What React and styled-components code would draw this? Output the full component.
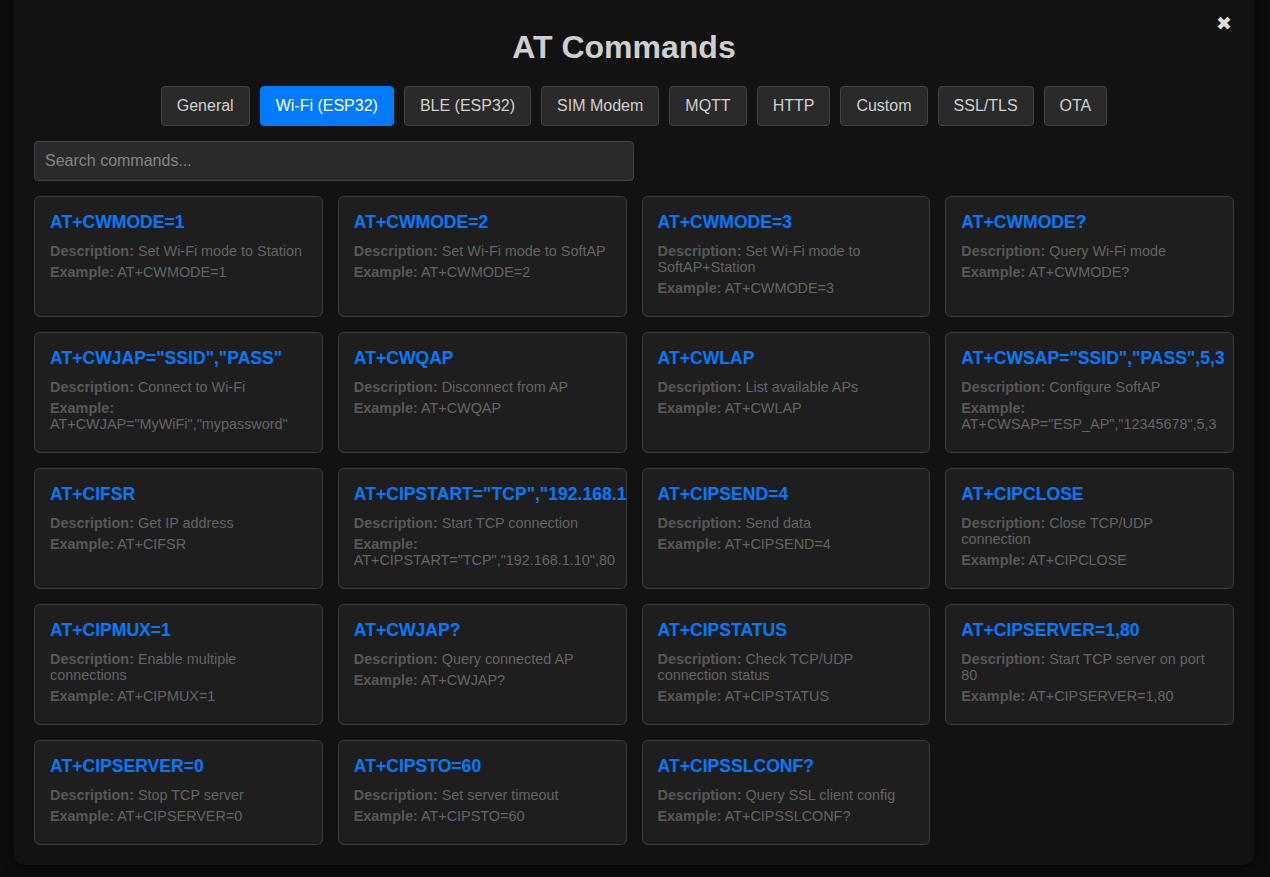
import React, { useState } from 'react';
import styled, { createGlobalStyle } from 'styled-components';

const GlobalStyle = createGlobalStyle`
  html, body {
    margin: 0;
    padding: 0;
    background: #0d0d0d;
    font-family: "Liberation Sans", Arial, sans-serif;
    overflow: hidden;
  }
  * { box-sizing: border-box; }
`;

const Overlay = styled.div`
  min-height: 100vh;
  padding: 0 16px 12px 14px;
`;

const Modal = styled.div`
  position: relative;
  max-width: 1240px;
  margin: -12px auto 0;
  padding: 32px 20px 20px;
  background: #121212;
  border-radius: 10px;
  box-shadow: 0 0 12px rgba(0, 0, 0, 0.6);
`;

const CloseButton = styled.button`
  position: absolute;
  top: 26px;
  right: 22px;
  background: none;
  border: none;
  padding: 0;
  color: #dcdcdc;
  font-family: "DejaVu Sans", sans-serif;
  font-size: 19px;
  line-height: 1;
  cursor: pointer;
`;

const Title = styled.h2`
  margin: 9px 0 20px;
  padding-right: 20px;
  text-align: center;
  font-size: 32px;
  font-weight: 700;
  color: #cfcfcf;
`;

const Tabs = styled.div`
  display: flex;
  justify-content: center;
  gap: 10px;
  margin-bottom: 15px;
`;

const Tab = styled.button`
  padding: 10px 15px;
  font-family: "Liberation Sans", Arial, sans-serif;
  font-size: 16px;
  line-height: 18px;
  border-radius: 4px;
  border: 1px solid ${(p) => (p.$active ? '#007bff' : '#444')};
  background: ${(p) => (p.$active ? '#007bff' : '#2a2a2a')};
  color: ${(p) => (p.$active ? '#fff' : '#d0d0d0')};
  cursor: pointer;
`;

const Search = styled.input`
  display: block;
  width: 600px;
  height: 40px;
  margin-bottom: 15px;
  padding: 10px;
  font-family: "Liberation Sans", Arial, sans-serif;
  font-size: 16px;
  color: #ddd;
  background: #2a2a2a;
  border: 1px solid #444;
  border-radius: 4px;
  outline: none;

  &::placeholder {
    color: #858585;
  }
`;

const Grid = styled.div`
  display: grid;
  grid-template-columns: repeat(4, 1fr);
  gap: 15px;
`;

const Card = styled.div`
  padding: 15px;
  background: #1e1e1e;
  border: 1px solid #3c3c3c;
  border-radius: 6px;
  overflow: hidden;
`;

const Command = styled.h3`
  margin: 0 0 10px;
  font-size: 17.6px;
  font-weight: 700;
  color: #007bff;
  white-space: nowrap;
`;

const Line = styled.p`
  margin: 5px 0;
  font-size: 14.4px;
  color: #646464;

  strong {
    color: #585858;
  }
`;

const tabs = ['General', 'Wi-Fi (ESP32)', 'BLE (ESP32)', 'SIM Modem', 'MQTT', 'HTTP', 'Custom', 'SSL/TLS', 'OTA'];

const commands = [
  ['AT+CWMODE=1', 'Set Wi-Fi mode to Station', 'AT+CWMODE=1'],
  ['AT+CWMODE=2', 'Set Wi-Fi mode to SoftAP', 'AT+CWMODE=2'],
  ['AT+CWMODE=3', 'Set Wi-Fi mode to SoftAP+Station', 'AT+CWMODE=3'],
  ['AT+CWMODE?', 'Query Wi-Fi mode', 'AT+CWMODE?'],
  ['AT+CWJAP="SSID","PASS"', 'Connect to Wi-Fi', 'AT+CWJAP="MyWiFi","mypassword"'],
  ['AT+CWQAP', 'Disconnect from AP', 'AT+CWQAP'],
  ['AT+CWLAP', 'List available APs', 'AT+CWLAP'],
  ['AT+CWSAP="SSID","PASS",5,3', 'Configure SoftAP', 'AT+CWSAP="ESP_AP","12345678",5,3'],
  ['AT+CIFSR', 'Get IP address', 'AT+CIFSR'],
  ['AT+CIPSTART="TCP","192.168.1.10",80', 'Start TCP connection', 'AT+CIPSTART="TCP","192.168.1.10",80'],
  ['AT+CIPSEND=4', 'Send data', 'AT+CIPSEND=4'],
  ['AT+CIPCLOSE', 'Close TCP/UDP connection', 'AT+CIPCLOSE'],
  ['AT+CIPMUX=1', 'Enable multiple connections', 'AT+CIPMUX=1'],
  ['AT+CWJAP?', 'Query connected AP', 'AT+CWJAP?'],
  ['AT+CIPSTATUS', 'Check TCP/UDP connection status', 'AT+CIPSTATUS'],
  ['AT+CIPSERVER=1,80', 'Start TCP server on port 80', 'AT+CIPSERVER=1,80'],
  ['AT+CIPSERVER=0', 'Stop TCP server', 'AT+CIPSERVER=0'],
  ['AT+CIPSTO=60', 'Set server timeout', 'AT+CIPSTO=60'],
  ['AT+CIPSSLCONF?', 'Query SSL client config', 'AT+CIPSSLCONF?'],
];

export default function App() {
  const [active, setActive] = useState('Wi-Fi (ESP32)');
  const [query, setQuery] = useState('');

  const shown = commands.filter(([cmd, desc]) =>
    (cmd + ' ' + desc).toLowerCase().includes(query.toLowerCase())
  );

  return (
    <>
      <GlobalStyle />
      <Overlay>
        <Modal>
          <CloseButton aria-label="Close">✖</CloseButton>
          <Title>AT Commands</Title>
          <Tabs>
            {tabs.map((t) => (
              <Tab key={t} $active={t === active} onClick={() => setActive(t)}>
                {t}
              </Tab>
            ))}
          </Tabs>
          <Search
            placeholder="Search commands..."
            value={query}
            onChange={(e) => setQuery(e.target.value)}
          />
          <Grid>
            {shown.map(([cmd, desc, example]) => (
              <Card key={cmd}>
                <Command>{cmd}</Command>
                <Line>
                  <strong>Description:</strong> {desc}
                </Line>
                <Line>
                  <strong>Example:</strong> {example}
                </Line>
              </Card>
            ))}
          </Grid>
        </Modal>
      </Overlay>
    </>
  );
}
